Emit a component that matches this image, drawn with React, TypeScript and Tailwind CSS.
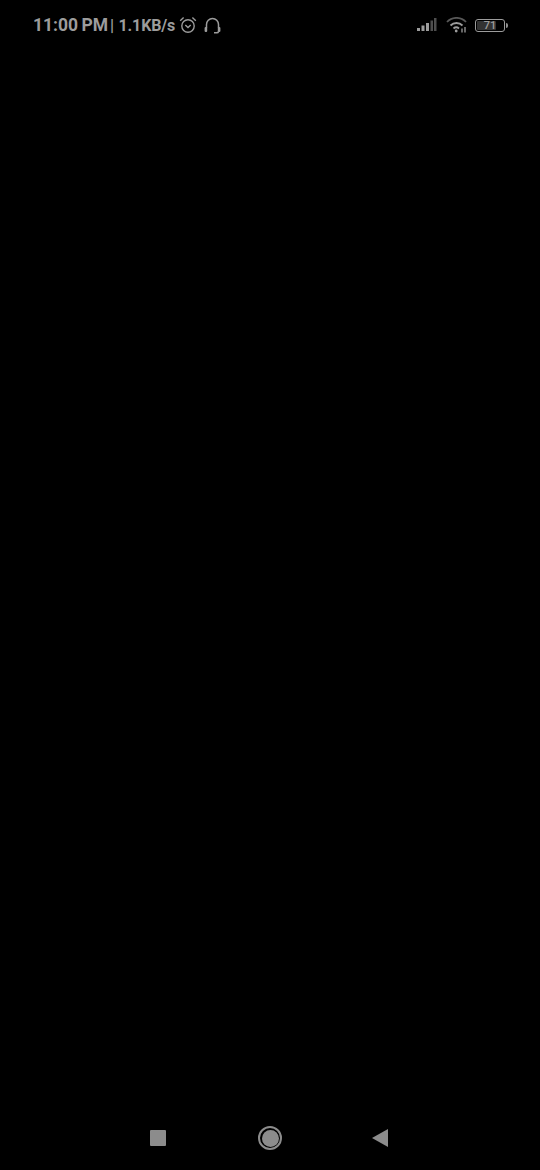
export default function App() {
  return (
    <div className="w-[540px] h-[1170px] bg-black flex flex-col justify-between font-['Roboto',sans-serif] overflow-hidden">
      <div className="flex items-center justify-between h-[50px] pl-[33px] pr-[32px] text-[#9c9c9c]">
        <div className="flex items-center">
          <span className="flex items-center font-bold leading-none whitespace-nowrap pt-[1px]">
            <span className="text-[17.5px] [word-spacing:-1px]">11:00 PM</span>
            <span className="text-[16px] ml-[2px]">|</span>
            <span className="text-[16px] ml-[4.5px] tracking-[-0.15px]">1.1KB/s</span>
          </span>
          <svg width="18" height="18" viewBox="0 0 18 18" className="ml-[4px]" fill="none" stroke="#9c9c9c" strokeWidth="1.4">
            <circle cx="9" cy="10" r="6.2" />
            <path d="M6.3 9 L9 11.5 L11.7 9" />
            <path d="M1.2 4.8 L4.6 1.6 M16.8 4.8 L13.4 1.6" />
          </svg>
          <svg width="20" height="18" viewBox="0 0 20 18" className="ml-[6px]" fill="none" stroke="#9c9c9c" strokeWidth="1.5">
            <path d="M3.5 12 V8.5 a6 6 0 0 1 12 0 V12" />
            <rect x="1.6" y="11" width="2.6" height="5" rx="1" fill="#9c9c9c" stroke="none" />
            <rect x="14.8" y="11" width="2.6" height="5" rx="1" fill="#9c9c9c" stroke="none" />
            <path d="M15.5 15.5 a2 1.5 0 0 1 -2.5 1.2 H11" />
          </svg>
        </div>
        <div className="flex items-center">
          <svg width="20" height="14" viewBox="0 0 20 14">
            <rect x="0" y="10" width="3" height="3" fill="#9c9c9c" />
            <rect x="4.5" y="7.5" width="3" height="5.5" fill="#9c9c9c" />
            <rect x="9" y="5" width="3" height="8" fill="#9c9c9c" />
            <rect x="13.5" y="2.5" width="2.5" height="10.5" fill="#4f4f4f" />
            <rect x="17" y="0" width="2.5" height="13" fill="#4f4f4f" />
          </svg>
          <svg width="22" height="16" viewBox="0 0 22 16" className="ml-[9px]" fill="none" stroke="#9c9c9c" strokeWidth="1.8">
            <path d="M1 5 a13 13 0 0 1 19 0" stroke="#585858" />
            <path d="M4.5 8.5 a8.5 8.5 0 0 1 12 0" />
            <path d="M7.5 11.5 a4.2 4.2 0 0 1 5.5 0" />
            <circle cx="10.2" cy="14" r="1.4" fill="#9c9c9c" stroke="none" />
            <path d="M16 11.5 V15.5 M19 10 V15.5" strokeWidth="1.3" />
          </svg>
          <div className="ml-[7px] flex items-center">
            <div className="relative w-[30px] h-[13px] border border-[#9c9c9c] rounded-[3px] flex items-center justify-center">
              <div className="absolute left-[1px] top-[1px] bottom-[1px] w-[19px] bg-[#333333] rounded-[1px]" />
              <span className="relative text-[11px] leading-none text-[#9c9c9c] font-medium">71</span>
            </div>
            <div className="w-[2px] h-[5px] bg-[#8f8f8f] ml-[1px] rounded-r-sm" />
          </div>
        </div>
      </div>
      <div className="flex items-center justify-center h-[64px]">
        <div className="flex items-center pr-[2px]">
          <div className="w-[16px] h-[16px] bg-[#8c8c8c] rounded-[1px] mr-[92px]" />
          <div className="w-[24px] h-[24px] rounded-full border-2 border-[#8c8c8c] flex items-center justify-center mr-[90px]">
            <div className="w-[17px] h-[17px] rounded-full bg-[#8c8c8c]" />
          </div>
          <svg width="16" height="18" viewBox="0 0 16 18"><path d="M16 0 V18 L0 9 Z" fill="#8c8c8c" /></svg>
        </div>
      </div>
    </div>
  );
}
